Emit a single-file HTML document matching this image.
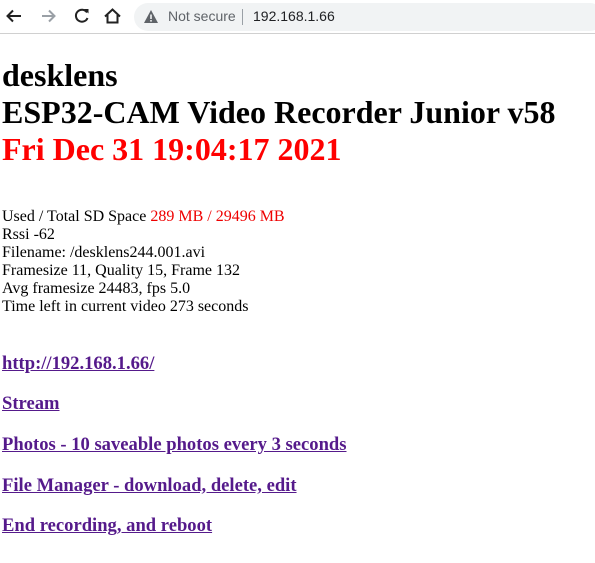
<!DOCTYPE html>
<html><head><style>
body{margin:0;width:595px;height:563px;background:#fff;font-family:"Liberation Serif",serif;position:relative;overflow:hidden}
.bar{position:absolute;left:0;top:0;width:595px;height:33px;background:#fff;border-bottom:1px solid #d0d0d0}
.omni{position:absolute;left:134px;top:3px;width:470px;height:28px;border-radius:14px;background:#f1f3f4}
.h{position:absolute;left:2px;font-weight:bold;font-size:32px;line-height:37px;white-space:nowrap}
.t{position:absolute;left:2px;top:208px;font-size:16px;line-height:18px;white-space:nowrap}
a{position:absolute;left:2px;color:#551a8b;font-weight:bold;font-size:18.6px;text-decoration:underline;white-space:nowrap}
</style></head><body>
<div class="bar">
<svg width="130" height="33" style="position:absolute;left:0;top:0">
<path d="M21 16H8M13 10.5L7.5 16L13 21.5" stroke="#222" stroke-width="2" fill="none"/>
<path d="M42 16H55M49 10.5L54.5 16L49 21.5" stroke="#9aa0a6" stroke-width="2" fill="none"/>
<path d="M87 12.5A6 6 0 1 0 87.5 18" stroke="#222" stroke-width="2" fill="none"/><path d="M84 9L88.5 9L88.5 13.5Z" fill="#222"/>
<path d="M105 16.5L112.5 9.5L120 16.5M107.5 15V22.5H117.5V15" stroke="#222" stroke-width="2" fill="none"/>
</svg>
<div class="omni">
<svg width="16" height="16" style="position:absolute;left:9px;top:6px"><path d="M8 1L15 14H1Z" fill="#5f6368"/><rect x="7.2" y="5.5" width="1.6" height="4.5" fill="#f1f3f4"/><rect x="7.2" y="11" width="1.6" height="1.6" fill="#f1f3f4"/></svg>
<span style="position:absolute;left:34px;top:5px;font:14px 'Liberation Sans',sans-serif;color:#5f6368">Not secure</span>
<span style="position:absolute;left:108px;top:6px;width:1px;height:16px;background:#9aa0a6"></span>
<span style="position:absolute;left:119px;top:5px;font:14px 'Liberation Sans',sans-serif;color:#202124">192.168.1.66</span>
</div>
</div>
<div class="h" style="top:57px">desklens<br>ESP32-CAM Video Recorder Junior v58<br><span style="color:#f00">Fri Dec 31 19:04:17 2021</span></div>
<div class="t">Used / Total SD Space <span style="color:#e00">289 MB / 29496 MB</span><br>Rssi -62<br>Filename: /desklens244.001.avi<br>Framesize 11, Quality 15, Frame 132<br>Avg framesize 24483, fps 5.0<br>Time left in current video 273 seconds</div>
<a style="top:353px">http://192.168.1.66/</a>
<a style="top:393px">Stream</a>
<a style="top:434px">Photos - 10 saveable photos every 3 seconds</a>
<a style="top:475px">File Manager - download, delete, edit</a>
<a style="top:515px">End recording, and reboot</a>
</body></html>
